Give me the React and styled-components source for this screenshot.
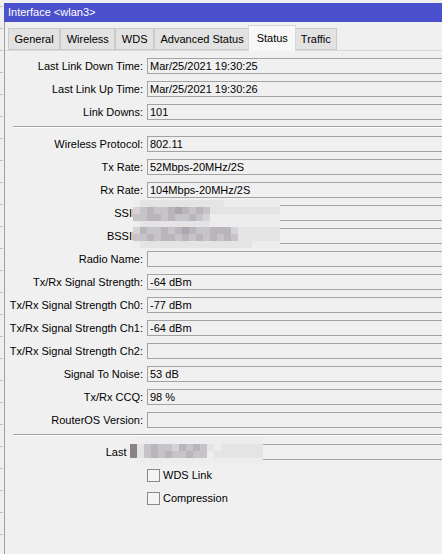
import React from 'react'
import styled, { createGlobalStyle } from 'styled-components'

const GlobalStyle = createGlobalStyle`
  body {
    margin: 0;
    background: #f0f0f0;
    font-family: "Liberation Sans", Arial, sans-serif;
    font-size: 11px;
    color: #000;
  }
`

const Desktop = styled.div`
  display: flex;
  width: 442px;
  height: 554px;
  overflow: hidden;
`

const BehindStrip = styled.div`
  width: 4px;
  flex: none;
  background: repeating-linear-gradient(
    to bottom,
    transparent 0,
    transparent 6px,
    #c4c4c4 6px,
    #c4c4c4 7px,
    transparent 7px,
    transparent 22px
  );
  background-size: 3px 22px;
  background-repeat: repeat-y;
`

const Window = styled.div`
  flex: 1;
  display: flex;
  flex-direction: column;
  margin-top: 3px;
  min-width: 0;
`

const TitleBar = styled.div`
  height: 19px;
  line-height: 19px;
  padding-left: 4px;
  background: #4b50cc;
  color: #fff;
  white-space: nowrap;
`

const Body = styled.div`
  flex: 1;
  display: flex;
  flex-direction: column;
  border-left: 1px solid #a0a0a0;
  background: #f0f0f0;
`

const TabBar = styled.div`
  display: flex;
  align-items: flex-end;
  height: 28px;
  padding-left: 3px;
`

const Tab = styled.div`
  position: relative;
  box-sizing: border-box;
  height: ${p => (p.$active ? '26px' : '22px')};
  margin: ${p => (p.$active ? '0 -2px -1px' : '0')};
  padding: ${p => (p.$active ? '0 7.5px' : '0 5.5px')};
  line-height: ${p => (p.$active ? '24px' : '21px')};
  border: 1px solid ${p => (p.$active ? '#d9d9d9' : '#cacaca')};
  border-bottom: ${p => (p.$active ? 'none' : '1px solid #cacaca')};
  background: ${p => (p.$active ? '#f7f7f7' : '#e2e2e2')};
  z-index: ${p => (p.$active ? 2 : 1)};
  white-space: nowrap;
`

const Panel = styled.div`
  flex: 1;
  display: flex;
  flex-direction: column;
  gap: 7px;
  padding-top: 7px;
  border-top: 1px solid #d9d9d9;
`

const Row = styled.div`
  position: relative;
  display: flex;
  align-items: center;
  gap: 4px;
  height: 16px;
`

const Label = styled.div`
  width: 138px;
  flex: none;
  text-align: right;
  white-space: nowrap;
`

const Field = styled.div`
  box-sizing: border-box;
  flex: none;
  width: 320px;
  height: 16px;
  line-height: 14px;
  padding: 0 2px;
  border: 1px solid #a3a3a3;
  background: #f0f0f0;
  white-space: nowrap;
`

const Separator = styled.div`
  margin: -1px 0 1px 8px;
  border-top: 1px solid #a0a0a0;
  border-bottom: 1px solid #fff;
`

const CheckRow = styled.label`
  display: flex;
  align-items: center;
  gap: 3px;
  height: 16px;
  padding-left: 142px;
`

const Box = styled.span`
  box-sizing: border-box;
  width: 13px;
  height: 13px;
  border: 1px solid #8a8a8a;
  background: #f4f4f4;
`

const Mosaic = styled.div`
  position: absolute;
  left: ${p => p.$left}px;
  top: ${p => p.$top}px;
  display: grid;
  grid-template-columns: repeat(${p => p.$cols}, 7px);
  grid-auto-rows: 7px;
  pointer-events: none;
`

const Cell = styled.span`
  background: ${p => p.$color};
`

const palette = {
  '.': 'transparent',
  '-': '#ededed',
  '=': '#e4e4e4',
  a: '#d5d3d7',
  b: '#c7c4c9',
  c: '#b9b5bb',
  d: '#aaa6ad',
  k: '#8b8289'
}

const Blur = ({ left, top, rows }) => (
  <Mosaic $left={left} $top={top} $cols={rows[0].length}>
    {rows.join('').split('').map((ch, i) => (
      <Cell key={i} $color={palette[ch]} />
    ))}
  </Mosaic>
)

const tabs = ['General', 'Wireless', 'WDS', 'Advanced Status', 'Status', 'Traffic']

const linkRows = [
  ['Last Link Down Time:', 'Mar/25/2021 19:30:25'],
  ['Last Link Up Time:', 'Mar/25/2021 19:30:26'],
  ['Link Downs:', '101']
]

const statusRows = [
  ['Wireless Protocol:', '802.11'],
  ['Tx Rate:', '52Mbps-20MHz/2S'],
  ['Rx Rate:', '104Mbps-20MHz/2S'],
  ['SSID:', '', { top: -5, rows: ['-============--------', 'abcbbcdcbcb==========', 'bbccbcbbcba----------', '-==========----------'] }],
  ['BSSID:', '', { top: -1, rows: ['acbbcbcdcbbccca======', 'bbcbccbcbcbcbcb======', '-================----'] }],
  ['Radio Name:', ''],
  ['Tx/Rx Signal Strength:', '-64 dBm'],
  ['Tx/Rx Signal Strength Ch0:', '-77 dBm'],
  ['Tx/Rx Signal Strength Ch1:', '-64 dBm'],
  ['Tx/Rx Signal Strength Ch2:', ''],
  ['Signal To Noise:', '53 dB'],
  ['Tx/Rx CCQ:', '98 %'],
  ['RouterOS Version:', '']
]

const FormRow = ({ label, value, blur }) => (
  <Row>
    <Label>{label}</Label>
    <Field>{value}</Field>
    {blur && <Blur left={blur.left || 128} top={blur.top} rows={blur.rows} />}
  </Row>
)

export default function App() {
  return (
    <>
      <GlobalStyle />
      <Desktop>
        <BehindStrip />
        <Window>
          <TitleBar>Interface &lt;wlan3&gt;</TitleBar>
          <Body>
            <TabBar>
              {tabs.map(t => (
                <Tab key={t} $active={t === 'Status'}>{t}</Tab>
              ))}
            </TabBar>
            <Panel>
              {linkRows.map(([l, v]) => (
                <FormRow key={l} label={l} value={v} />
              ))}
              <Separator />
              {statusRows.map(([l, v, b]) => (
                <FormRow key={l} label={l} value={v} blur={b} />
              ))}
              <Separator />
              <FormRow
                label="Last IP:"
                value=""
                blur={{
                  left: 125,
                  top: -7,
                  rows: ['.------------------', 'k=bcbbacbcb=-======', 'k=bcbcbbcbb-=======', '.------------------']
                }}
              />
              <CheckRow><Box />WDS Link</CheckRow>
              <CheckRow><Box />Compression</CheckRow>
            </Panel>
          </Body>
        </Window>
      </Desktop>
    </>
  )
}
